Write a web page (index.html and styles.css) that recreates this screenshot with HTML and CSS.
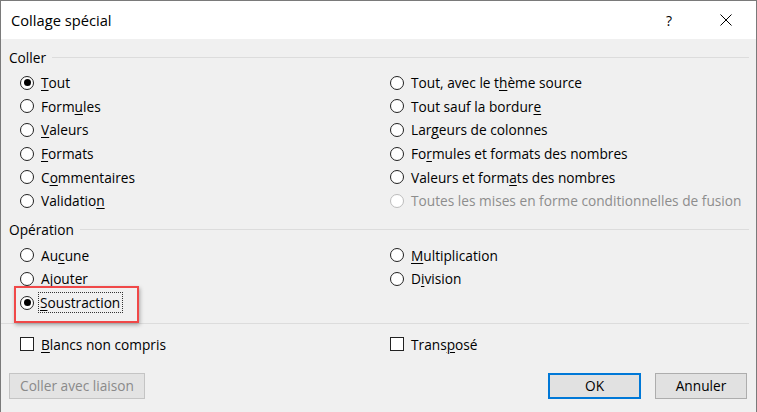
FILE: index.html
```html
<!DOCTYPE html>
<html lang="fr">
<head>
  <meta charset="UTF-8">
  <title>Collage spécial</title>
  <meta name="viewport" content="width=device-width, initial-scale=1">
  <link rel="stylesheet" href="styles.css">
</head>
<body>

  <div class="dialog">
    <div class="titlebar">
      <span class="title">Collage spécial</span>
      <span class="help">?</span>
      <span class="close">
        <svg width="12" height="12" viewBox="0 0 12 12"><path d="M0.5 0.5 L11.5 11.5 M11.5 0.5 L0.5 11.5" stroke="#000" stroke-width="1" fill="none"/></svg>
      </span>
    </div>

    <div class="content">
      <div class="group-title"><span>Coller</span></div>
      <div class="options">
        <label class="opt"><span class="radio checked"></span><span><u>T</u>out</span></label>
        <label class="opt"><span class="radio"></span><span>Tout, avec le t<u>h</u>ème source</span></label>
        <label class="opt"><span class="radio"></span><span>Form<u>u</u>les</span></label>
        <label class="opt"><span class="radio"></span><span>Tout sauf la bordur<u>e</u></span></label>
        <label class="opt"><span class="radio"></span><span><u>V</u>aleurs</span></label>
        <label class="opt"><span class="radio"></span><span>Lar<u>g</u>eurs de colonnes</span></label>
        <label class="opt"><span class="radio"></span><span><u>F</u>ormats</span></label>
        <label class="opt"><span class="radio"></span><span>Fo<u>r</u>mules et formats des nombres</span></label>
        <label class="opt"><span class="radio"></span><span>C<u>o</u>mmentaires</span></label>
        <label class="opt"><span class="radio"></span><span>Valeurs et form<u>a</u>ts des nombres</span></label>
        <label class="opt"><span class="radio"></span><span>Validatio<u>n</u></span></label>
        <label class="opt disabled"><span class="radio"></span><span>Toutes les mises en forme conditionnelles de fusion</span></label>
      </div>

      <div class="group-title op"><span>Opération</span></div>
      <div class="options">
        <label class="opt"><span class="radio"></span><span>Au<u>c</u>une</span></label>
        <label class="opt"><span class="radio"></span><span><u>M</u>ultiplication</span></label>
        <label class="opt"><span class="radio"></span><span>A<u>j</u>outer</span></label>
        <label class="opt"><span class="radio"></span><span>D<u>i</u>vision</span></label>
        <label class="opt highlight"><span class="radio checked"></span><span class="focus"><u>S</u>oustraction</span></label>
      </div>

      <div class="separator"></div>

      <div class="options checks">
        <label class="opt"><span class="checkbox"></span><span><u>B</u>lancs non compris</span></label>
        <label class="opt"><span class="checkbox"></span><span>Trans<u>p</u>osé</span></label>
      </div>

      <div class="buttons">
        <button class="btn link" disabled>Coller avec liaison</button>
        <span class="spacer"></span>
        <button class="btn ok">OK</button>
        <button class="btn">Annuler</button>
      </div>
    </div>
  </div>

</body>
</html>
```

FILE: styles.css
```css
* { margin: 0; padding: 0; box-sizing: border-box; }
body {
  width: 757px;
  height: 412px;
  overflow: hidden;
  background: #f0f0f0;
  font-family: 'Segoe UI', 'Open Sans', sans-serif;
  font-size: 13.7px;
  color: #000;
}
.dialog {
  height: 412px;
  border: 1px solid #7a7a7a;
  border-bottom: none;
  background: #f0f0f0;
}
.titlebar {
  height: 38px;
  background: #fff;
  display: flex;
  align-items: center;
  padding-left: 10px;
}
.title { font-size: 14.7px; flex: 1; }
.help { font-size: 14px; width: 12px; margin-right: 42px; }
.close { width: 12px; height: 12px; margin-right: 24px; display: flex; }

.content { padding: 0 7px 0 8px; }

.group-title {
  height: 20px;
  margin-top: 8px;
  display: flex;
  align-items: center;
}
.group-title::after {
  content: "";
  flex: 1;
  height: 1px;
  background: #dcdcdc;
  margin-left: 6px;
}
.group-title.op { margin-top: 7px; }

.options {
  margin: 4px 0 0 11px;
  display: grid;
  grid-template-columns: 370px 1fr;
  grid-auto-rows: 23.6px;
}
.opt {
  display: flex;
  align-items: center;
  gap: 7px;
  white-space: nowrap;
}
.opt.disabled { color: #8d8d8d; }
.opt u { text-decoration-thickness: 1px; text-underline-offset: 2px; }

.radio {
  width: 14px;
  height: 14px;
  border: 1px solid #222;
  border-radius: 50%;
  background: #fff;
  display: flex;
  align-items: center;
  justify-content: center;
  flex-shrink: 0;
}
.radio.checked::after {
  content: "";
  width: 7px;
  height: 7px;
  border-radius: 50%;
  background: #000;
}
.opt.disabled .radio { border-color: #bcbcbc; }

.highlight { position: relative; }
.highlight::before {
  content: "";
  box-sizing: border-box;
  position: absolute;
  left: -6px;
  top: -5px;
  width: 125px;
  height: 37px;
  border: 2px solid #f04848;
  box-shadow: 1px 2px 4px rgba(0, 0, 0, 0.3);
}
.focus {
  outline: 1px dotted #333;
  outline-offset: 0;
  padding: 0 2px 0 1px;
  margin-left: -2px;
  line-height: 19px;
}

.separator {
  height: 1px;
  background: #dcdcdc;
  margin: 9px 0 0 -8px;
}

.checks { margin-top: 8px; }
.checkbox {
  width: 14px;
  height: 14px;
  border: 1px solid #222;
  background: #fff;
  flex-shrink: 0;
}

.buttons {
  display: flex;
  gap: 14px;
  margin: 17px 2px 0 0;
}
.spacer { flex: 1; }
.btn {
  height: 26px;
  width: 92px;
  border: 1px solid #adadad;
  background: #e1e1e1;
  font-family: inherit;
  font-size: 13.7px;
  color: #000;
}
.btn.ok { width: 93px; border: 2px solid #0078d7; }
.btn.link {
  width: 136px;
  color: #8a8a8a;
  border-color: #c4c4c4;
  background: #e3e3e3;
}
```
